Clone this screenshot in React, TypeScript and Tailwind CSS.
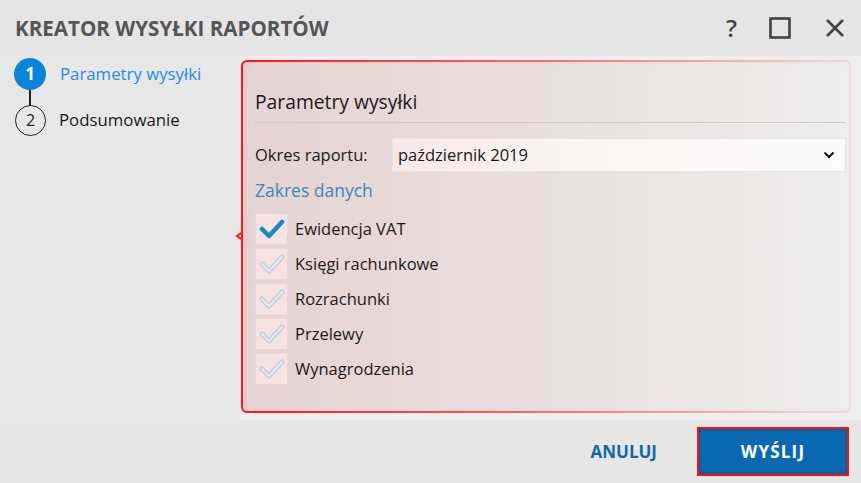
import React from "react";

const font = { fontFamily: "'Open Sans', 'Noto Sans', sans-serif" };

function Check({ active }: { active: boolean }) {
  return (
    <div className="w-[33px] h-[32px] bg-[#f5e2e2] border border-[#ecd6d6] flex items-center justify-center">
      <svg width="26" height="22" viewBox="0 0 26 22">
        {active ? (
          <path d="M3 11 L10 18 L23 4" fill="none" stroke="#1788c3" strokeWidth="4.5" strokeLinecap="round" strokeLinejoin="round" />
        ) : (
          <>
            <path d="M3 11 L10 18 L23 4" fill="none" stroke="#bcd2e1" strokeWidth="5" strokeLinecap="round" strokeLinejoin="round" />
            <path d="M3 11 L10 18 L23 4" fill="none" stroke="#f3e4e6" strokeWidth="2" strokeLinecap="round" strokeLinejoin="round" />
          </>
        )}
      </svg>
    </div>
  );
}

export default function App() {
  const items = ["Ewidencja VAT", "Księgi rachunkowe", "Rozrachunki", "Przelewy", "Wynagrodzenia"];
  return (
    <div className="w-[861px] h-[483px] flex flex-col bg-[#e6e6e6] text-[#1a1a1a] overflow-hidden" style={font}>
      {/* header */}
      <div className="h-[56px] flex items-center pl-[15px] pr-[16px] bg-[#e5e5e5]">
        <div className="flex-1 text-[20.6px] font-bold text-[#555555]">KREATOR WYSYŁKI RAPORTÓW</div>
        <div className="flex items-center">
          <span className="text-[24px] font-semibold text-[#444] leading-none mr-[32px]">?</span>
          <svg width="22" height="22" viewBox="0 0 22 22" className="mr-[34px]">
            <rect x="1.5" y="1.5" width="19" height="19" fill="none" stroke="#444" strokeWidth="2.6" />
          </svg>
          <svg width="20" height="20" viewBox="0 0 20 20">
            <path d="M2 2 L18 18 M18 2 L2 18" stroke="#444" strokeWidth="2.6" />
          </svg>
        </div>
      </div>
      {/* body */}
      <div className="h-[364px] flex">
        <div className="w-[240px] bg-[#e7e7e7] pl-[14px] pt-[2px]">
          <div className="flex items-center h-[32px]">
            <div className="w-[32px] h-[32px] rounded-full bg-[#0a84d8] flex items-center justify-center text-white font-bold text-[17px]">1</div>
            <span className="ml-[14px] text-[16.8px] text-[#2a8ae0]">Parametry wysyłki</span>
          </div>
          <div className="w-[2px] h-[16px] bg-[#222] ml-[15px]" />
          <div className="flex items-center h-[30px] -mt-[1px]">
            <div className="w-[31px] h-[31px] rounded-full border-[1.5px] border-[#222] flex items-center justify-center text-[16px] text-[#222] ml-[1px]">2</div>
            <span className="ml-[13px] text-[16.8px] text-[#1a1a1a]">Podsumowanie</span>
          </div>
        </div>
        <div className="flex-1 bg-[#eeeeee] pt-[4px] pl-[1px] pr-[10px] pb-[7px]">
          <div className="relative h-full rounded-[6px] border-2 border-transparent shadow-[inset_4px_0_4px_rgba(0,0,0,0.04)] [background:linear-gradient(to_right,#e6d3d3,#e9dfdf_50%,#eeeeee)_padding-box,linear-gradient(to_right,#ff1414,rgba(255,40,40,0.75)_40%,rgba(255,80,80,0.12))_border-box] pl-[12px] pr-[3px]">
            {/* notch */}
            <svg className="absolute left-[-8px] top-[168px]" width="8" height="12" viewBox="0 0 8 12">
              <path d="M7 0 L7 2.5 L2 6 L7 9.5 L7 12" fill="none" stroke="#ff1414" strokeWidth="2" />
            </svg>
            <div className="h-[61px] flex items-end pb-[5px] border-b border-[#d4c9c9] text-[19.3px] text-[#1a1a1a]">Parametry wysyłki</div>
            <div className="mt-[15px] flex items-center h-[34px]">
              <span className="w-[137px] text-[16.5px]">Okres raportu:</span>
              <div className="flex-1 h-[34px] flex items-center pl-[5px] pr-[10px] border border-[#ece2e2] bg-[linear-gradient(to_right,#f7e8e8,#fbf7f7_50%,#fbfbfb)]">
                <span className="flex-1 text-[16.5px]">październik 2019</span>
                <svg width="12" height="8" viewBox="0 0 12 8">
                  <path d="M1.5 1.5 L6 6 L10.5 1.5" fill="none" stroke="#111" strokeWidth="2" />
                </svg>
              </div>
            </div>
            <div className="mt-[5px] h-[26px] flex items-center text-[17.5px] text-[#3a8ab8]">Zakres danych</div>
            <div className="mt-[10px] flex flex-col gap-[3px]">
              {items.map((t, i) => (
                <div key={t} className="flex items-center">
                  <Check active={i === 0} />
                  <span className="ml-[7px] text-[16.5px] text-[#1a1a1a]">{t}</span>
                </div>
              ))}
            </div>
          </div>
        </div>
      </div>
      {/* footer */}
      <div className="h-[63px] flex items-center justify-end pr-[12px] bg-[#e6e6e6]">
        <span className="text-[17px] font-bold text-[#0c6aa8] mr-[40px]">ANULUJ</span>
        <div className="w-[152px] h-[49px] bg-[#0a69b1] border-2 border-[#ff1010] shadow-[inset_0_0_3px_rgba(0,0,0,0.35)] flex items-center justify-center text-white font-bold text-[17px] tracking-[1.2px]">WYŚLIJ</div>
      </div>
    </div>
  );
}
